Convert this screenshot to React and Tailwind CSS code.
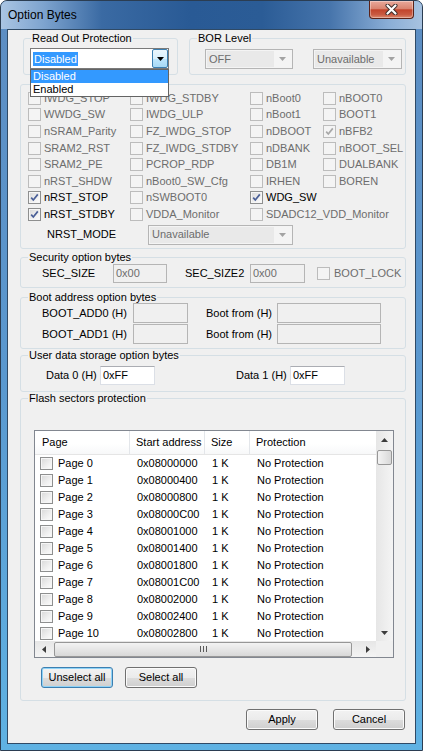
// Option Bytes dialog (Win7 basic look)

import clsx from 'clsx';

const GRAY = 'text-[#6d6d6d]';

const OPTIONS = [
  { label: 'IWDG_STOP' }, { label: 'IWDG_STDBY' }, { label: 'nBoot0' }, { label: 'nBOOT0' },
  { label: 'WWDG_SW' }, { label: 'IWDG_ULP' }, { label: 'nBoot1' }, { label: 'BOOT1' },
  { label: 'nSRAM_Parity' }, { label: 'FZ_IWDG_STOP' }, { label: 'nDBOOT' }, { label: 'nBFB2', checked: true },
  { label: 'SRAM2_RST' }, { label: 'FZ_IWDG_STDBY' }, { label: 'nDBANK' }, { label: 'nBOOT_SEL' },
  { label: 'SRAM2_PE' }, { label: 'PCROP_RDP' }, { label: 'DB1M' }, { label: 'DUALBANK' },
  { label: 'nRST_SHDW' }, { label: 'nBoot0_SW_Cfg' }, { label: 'IRHEN' }, { label: 'BOREN' },
  { label: 'nRST_STOP', checked: true, enabled: true }, { label: 'nSWBOOT0' }, { label: 'WDG_SW', checked: true, enabled: true }, { empty: true },
  { label: 'nRST_STDBY', checked: true, enabled: true }, { label: 'VDDA_Monitor' }, { label: 'SDADC12_VDD_Monitor', span: true },
];

const PAGES = Array.from({ length: 11 }, (_, i) => ({
  name: `Page ${i}`,
  addr: '0x' + (0x08000000 + i * 0x400).toString(16).toUpperCase().padStart(8, '0'),
}));

function CheckBox({ checked = false, disabled = false }) {
  return (
    <span
      className={clsx(
        'flex h-[13px] w-[13px] shrink-0 items-center justify-center border',
        disabled
          ? 'border-[#bcbcbc] bg-[#f4f4f4]'
          : 'border-[#8e8f8f] bg-[linear-gradient(135deg,#d8d8d8_0%,#f0f0f0_60%,#fdfdfd_100%)] shadow-[inset_0_0_0_1px_#f6f6f6]'
      )}
    >
      {checked && (
        <svg width="11" height="11" viewBox="0 0 11 11">
          <path
            d="M2.2 5.6 L4.3 8 L8.8 2.4"
            fill="none"
            stroke={disabled ? '#a8a8a8' : '#4a5f97'}
            strokeWidth="1.7"
          />
        </svg>
      )}
    </span>
  );
}

function Arrow({ dir = 'down', color = '#000' }) {
  const d = {
    down: 'M0 0 H7 L3.5 4 Z',
    up: 'M0 4 H7 L3.5 0 Z',
    left: 'M4 0 V7 L0 3.5 Z',
    right: 'M0 0 V7 L4 3.5 Z',
  }[dir];
  const vertical = dir === 'up' || dir === 'down';
  return (
    <svg width={vertical ? 7 : 4} height={vertical ? 4 : 7} viewBox={vertical ? '0 0 7 4' : '0 0 4 7'}>
      <path d={d} fill={color} />
    </svg>
  );
}

function Group({ title, className, children }) {
  return (
    <fieldset className={clsx('rounded-[3px] border border-[#d5dfe5]', className)}>
      {title && <legend className="ml-[7px] px-[1px] leading-[12px]">{title}</legend>}
      {children}
    </fieldset>
  );
}

function DisabledCombo({ value, className }) {
  return (
    <div className={clsx('flex h-[20px] border border-[#b5b5b5] bg-[#f4f4f4] p-[1px]', className)}>
      <div className={clsx('flex flex-1 items-center bg-[#e9e9e9] pl-[2px]', GRAY)}>{value}</div>
      <div className="flex w-[17px] items-center justify-center">
        <Arrow color="#a3a3a3" />
      </div>
    </div>
  );
}

function Field({ value, disabled = true, className }) {
  return (
    <div
      className={clsx(
        'flex h-[19px] items-center border pl-[2px]',
        disabled
          ? 'border-[#b5b5b5] bg-[#f0f0f0] text-[#6d6d6d]'
          : 'border-[#dbdfe6] border-t-[#abadb3] bg-white text-black',
        className
      )}
    >
      {value}
    </div>
  );
}

function Btn({ children, focused, className }) {
  return (
    <button
      className={clsx(
        'flex h-[21px] w-[72px] items-center justify-center rounded-[3px] border bg-[linear-gradient(180deg,#f2f2f2_0%,#ebebeb_50%,#dddddd_51%,#cfcfcf_100%)]',
        focused
          ? 'border-[#3c7fb1] shadow-[inset_0_0_0_1px_#8fd3f7]'
          : 'border-[#707070] shadow-[inset_0_0_0_1px_#fbfbfb]',
        className
      )}
    >
      {children}
    </button>
  );
}

function Option({ item }) {
  if (item.empty) return <div />;
  return (
    <div className={clsx('flex items-center gap-[3px] whitespace-nowrap', item.span && 'col-span-2')}>
      <CheckBox checked={item.checked} disabled={!item.enabled} />
      <span className={item.enabled ? 'text-black' : GRAY}>{item.label}</span>
    </div>
  );
}

function FlashTable() {
  return (
    <div className="ml-[13px] mt-[26px] flex h-[228px] w-[360px] flex-col overflow-hidden border border-[#828790] bg-white">
      <div className="flex h-[210px]">
        <div className="flex w-[341px] flex-col overflow-hidden">
          {/* Header */}
          <div className="flex h-[24px] shrink-0 border-b border-[#e5e5e5] bg-[linear-gradient(180deg,#ffffff_0%,#ffffff_55%,#f7f8f9_100%)]">
            <div className="flex w-[95px] items-center border-r border-[#e3e6ea] pl-[7px]">Page</div>
            <div className="flex w-[75px] items-center border-r border-[#e3e6ea] pl-[6px]">Start address</div>
            <div className="flex w-[45px] items-center border-r border-[#e3e6ea] pl-[6px]">Size</div>
            <div className="flex flex-1 items-center pl-[6px]">Protection</div>
          </div>
          {/* Rows */}
          {PAGES.map((p) => (
            <div key={p.name} className="flex h-[17px] shrink-0 items-center">
              <div className="flex w-[95px] items-center gap-[5px] pl-[5px]">
                <CheckBox />
                <span>{p.name}</span>
              </div>
              <div className="w-[75px] pl-[7px]">{p.addr}</div>
              <div className="w-[45px] pl-[7px]">1 K</div>
              <div className="flex-1 pl-[7px]">No Protection</div>
            </div>
          ))}
        </div>
        {/* Vertical scrollbar */}
        <div className="flex w-[17px] flex-col bg-[linear-gradient(90deg,#e6e6e6_0%,#f4f4f4_100%)]">
          <div className="flex h-[17px] items-center justify-center">
            <Arrow dir="up" color="#3c3c3c" />
          </div>
          <div className="mx-[1px] mt-[2px] h-[15px] rounded-[2px] border border-[#979797] bg-[linear-gradient(90deg,#f3f3f3_0%,#e6e6e6_50%,#d8d8d8_100%)]" />
          <div className="flex-1" />
          <div className="flex h-[17px] items-center justify-center">
            <Arrow dir="down" color="#3c3c3c" />
          </div>
        </div>
      </div>
      <div className="flex h-[17px]">
        {/* Horizontal scrollbar */}
        <div className="flex w-[341px] items-center bg-[linear-gradient(180deg,#e6e6e6_0%,#f4f4f4_100%)]">
          <div className="flex h-full w-[17px] items-center justify-center">
            <Arrow dir="left" color="#3c3c3c" />
          </div>
          <div className="ml-[2px] flex h-[15px] w-[298px] items-center justify-center gap-[2px] rounded-[2px] border border-[#979797] bg-[linear-gradient(180deg,#f3f3f3_0%,#e6e6e6_50%,#d8d8d8_100%)]">
            <span className="h-[6px] w-[1px] bg-[#5a5a5a]" />
            <span className="h-[6px] w-[1px] bg-[#5a5a5a]" />
            <span className="h-[6px] w-[1px] bg-[#5a5a5a]" />
          </div>
          <div className="flex-1" />
          <div className="flex h-full w-[17px] items-center justify-center">
            <Arrow dir="right" color="#3c3c3c" />
          </div>
        </div>
        <div className="w-[17px] bg-[#f0f0f0]" />
      </div>
    </div>
  );
}

export default function App() {
  return (
    <div className="h-[751px] w-[423px] font-['Liberation_Sans',Arial,sans-serif] text-[11px] leading-[13px] text-black">
      <div className="flex h-full flex-col rounded-t-[7px] border border-[#2b3d52] bg-[linear-gradient(180deg,#5d8dc2_0%,#5a98cf_50%,#5fb2e3_100%)]">
        {/* Title bar */}
        <div className="flex h-[28px] shrink-0 items-start rounded-t-[6px] bg-[linear-gradient(90deg,#aac5e3_0%,#7ea4cf_10%,#3a6aa3_24%,#295a95_45%,#2b5c96_62%,#4674ab_78%,#8aaed6_92%,#a7c2e0_100%)]">
          <span className="ml-[7px] mt-[7px] text-[12px] leading-[15px]">Option Bytes</span>
          <div className="ml-auto mr-[8px] flex h-[18px] w-[45px] items-center justify-center rounded-b-[4px] border border-t-0 border-[#5b2218] bg-[linear-gradient(180deg,#e9a99b_0%,#d98470_45%,#c2442c_52%,#c95a42_80%,#dc8a70_100%)] shadow-[inset_0_0_0_1px_rgba(255,255,255,0.35)]">
            <svg width="13" height="11" viewBox="0 0 13 11">
              <path d="M2.5 1.5 L10.5 9.5 M10.5 1.5 L2.5 9.5" stroke="#3b2a28" strokeWidth="4" strokeLinecap="round" />
              <path d="M2.5 1.5 L10.5 9.5 M10.5 1.5 L2.5 9.5" stroke="#ffffff" strokeWidth="2.2" strokeLinecap="round" />
            </svg>
          </div>
        </div>

        {/* Client area */}
        <div className="mx-[6px] mb-[6px] flex flex-1 flex-col border border-[#2f4a66] bg-[#f0f0f0]">
          {/* Read out protection + BOR */}
          <div className="mt-[2px] flex">
            <Group title="Read Out Protection" className="ml-[15px] h-[43px] w-[155px]">
              <div className="relative z-10 ml-[6px] mt-[4px] w-[139px]">
                <div className="flex h-[21px] border border-[#7a7a7a] bg-white">
                  <div className="flex flex-1 items-center pl-[2px]">
                    <span className="bg-[#3399ff] px-[1px] leading-[14px] text-white">Disabled</span>
                  </div>
                  <div className="flex w-[16px] items-center justify-center rounded-[2px] border border-[#3c7fb1] bg-[linear-gradient(180deg,#eaf6fd_0%,#d9f0fc_50%,#bee6fd_51%,#a7d9f5_100%)]">
                    <Arrow />
                  </div>
                </div>
                <div className="absolute left-0 top-full w-full border border-[#646464] bg-white">
                  <div className="h-[13px] bg-[#3399ff] pl-[2px] text-white">Disabled</div>
                  <div className="h-[13px] pl-[2px]">Enabled</div>
                </div>
              </div>
            </Group>
            <Group title="BOR Level" className="ml-[11px] h-[43px] w-[217px]">
              <div className="mt-[5px] flex">
                <DisabledCombo value="OFF" className="ml-[15px] w-[88px]" />
                <DisabledCombo value="Unavailable" className="ml-[20px] w-[89px]" />
              </div>
            </Group>
          </div>

          {/* User configuration checkboxes */}
          <Group className="ml-[12px] mt-[9px] h-[165px] w-[386px]">
            <div className="grid grid-cols-[102px_120px_73px_1fr] auto-rows-[16.6px] pl-[7px] pt-[5px]">
              {OPTIONS.map((o, i) => (
                <Option key={i} item={o} />
              ))}
            </div>
            <div className="mt-[2px] flex items-center">
              <span className="ml-[26px] w-[101px]">NRST_MODE</span>
              <DisabledCombo value="Unavailable" className="w-[145px]" />
            </div>
          </Group>

          {/* Security option bytes */}
          <Group title="Security option bytes" className="ml-[12px] mt-[2px] h-[37px] w-[386px]">
            <div className="mt-[1px] flex h-[19px] items-center pl-[21px]">
              <span className="w-[71px]">SEC_SIZE</span>
              <Field value="0x00" className="w-[54px]" />
              <span className="ml-[18px] w-[65px]">SEC_SIZE2</span>
              <Field value="0x00" className="w-[55px]" />
              <div className="ml-[12px] flex items-center gap-[4px]">
                <CheckBox disabled />
                <span className={GRAY}>BOOT_LOCK</span>
              </div>
            </div>
          </Group>

          {/* Boot address option bytes */}
          <Group title="Boot address option bytes" className="ml-[12px] mt-[3px] h-[58px] w-[386px]">
            <div className="flex flex-col gap-[1px] pl-[21px]">
              {['BOOT_ADD0 (H)', 'BOOT_ADD1 (H)'].map((l) => (
                <div key={l} className="flex h-[20px] items-center">
                  <span className="w-[91px]">{l}</span>
                  <Field className="h-[20px] w-[55px]" />
                  <span className="ml-[18px] w-[71px]">Boot from (H)</span>
                  <Field className="h-[20px] w-[104px]" />
                </div>
              ))}
            </div>
          </Group>

          {/* User data storage */}
          <Group title="User data storage option bytes" className="ml-[12px] h-[43px] w-[386px]">
            <div className="mt-[5px] flex items-center pl-[25px]">
              <span className="w-[54px]">Data 0 (H)</span>
              <Field value="0xFF" disabled={false} className="w-[55px]" />
              <span className="ml-[81px] w-[54px]">Data 1 (H)</span>
              <Field value="0xFF" disabled={false} className="w-[55px]" />
            </div>
          </Group>

          {/* Flash sectors protection */}
          <Group title="Flash sectors protection" className="ml-[12px] h-[309px] w-[386px]">
            <FlashTable />
            <div className="ml-[20px] mt-[9px] flex gap-[12px]">
              <Btn focused>Unselect all</Btn>
              <Btn>Select all</Btn>
            </div>
          </Group>

          <div className="mt-[8px] flex justify-end gap-[15px] pr-[10px]">
            <Btn>Apply</Btn>
            <Btn>Cancel</Btn>
          </div>
        </div>
      </div>
    </div>
  );
}
